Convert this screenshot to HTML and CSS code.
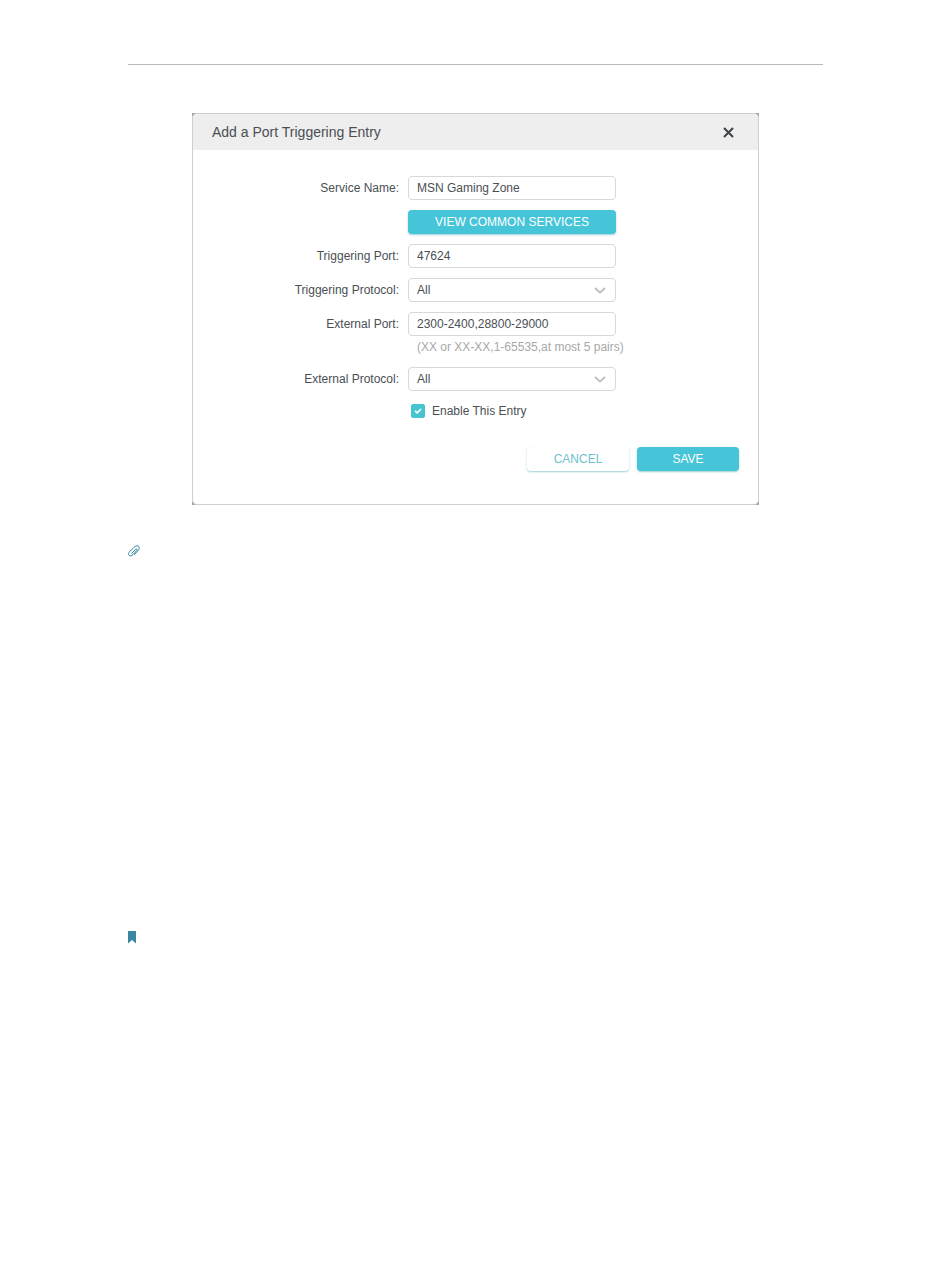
FILE: index.html
```html
<!DOCTYPE html>
<html lang="en">

<head>
    <meta charset="utf-8">
    <title>Add a Port Triggering Entry</title>
    <link rel="stylesheet" href="styles.css">
</head>

<body>
    <hr class="pageRule">

    <div class="backdrop">
    <form class="dialog">
        <div class="dialogHeader">
            <h1 class="dialogTitle">Add a Port Triggering Entry</h1>
            <button class="closeButton" type="button" aria-label="Close">
                <svg width="11" height="11" viewBox="0 0 11 11">
                    <path d="M1 1L10 10M10 1L1 10" fill="none" stroke="#3c4246" stroke-width="2" />
                </svg>
            </button>
        </div>

        <div class="fields">
            <label class="fieldLabel" for="serviceName">Service Name:</label>
            <input class="textField" type="text" id="serviceName" value="MSN Gaming Zone">

            <button class="button primaryButton servicesButton" type="button">VIEW COMMON SERVICES</button>

            <label class="fieldLabel" for="triggeringPort">Triggering Port:</label>
            <input class="textField" type="text" id="triggeringPort" value="47624">

            <label class="fieldLabel" for="triggeringProtocol">Triggering Protocol:</label>
            <div class="selectBox">
                <select class="textField" id="triggeringProtocol">
                    <option>All</option>
                    <option>TCP</option>
                    <option>UDP</option>
                </select>
                <svg class="arrow" width="12" height="7" viewBox="0 0 12 7">
                    <path d="M1 1L6 5.6L11 1" fill="none" stroke="#bcbcbc" stroke-width="1.8" />
                </svg>
            </div>

            <label class="fieldLabel" for="externalPort">External Port:</label>
            <input class="textField" type="text" id="externalPort" value="2300-2400,28800-29000">
            <p class="hint">(XX or XX-XX,1-65535,at most 5 pairs)</p>

            <label class="fieldLabel" for="externalProtocol">External Protocol:</label>
            <div class="selectBox">
                <select class="textField" id="externalProtocol">
                    <option>All</option>
                    <option>TCP</option>
                    <option>UDP</option>
                </select>
                <svg class="arrow" width="12" height="7" viewBox="0 0 12 7">
                    <path d="M1 1L6 5.6L11 1" fill="none" stroke="#bcbcbc" stroke-width="1.8" />
                </svg>
            </div>

            <div class="enableRow">
                <span class="checkWrap">
                    <input class="checkBox" type="checkbox" id="enableEntry" checked>
                    <svg class="checkMark" width="8" height="6" viewBox="0 0 8 6">
                        <path d="M1 2.8L3.2 4.8L7 1" fill="none" stroke="#fff" stroke-width="1.7" />
                    </svg>
                </span>
                <label for="enableEntry">Enable This Entry</label>
            </div>
        </div>

        <div class="actions">
            <button class="button cancelButton" type="button">CANCEL</button>
            <button class="button primaryButton" type="button">SAVE</button>
        </div>
    </form>
    </div>

    <!-- tips -->
    <section class="tips">
        <svg class="icon" width="12" height="12" viewBox="0 0 12 12">
            <path d="M3.8 8.3L7.6 4.4C8.8 3.3 9.8 4.3 8.8 5.5L5.1 9.5C3.6 11.1 1.9 11.2 1 10.3C0.1 9.3 0.5 7.8 1.8 6.5L6 2.3C7.8 0.5 9.8 0.5 10.8 1.5C11.8 2.6 11.3 4.3 10 5.7L6.3 9.6" fill="none" stroke="#2d86a0" stroke-width="1" stroke-linecap="round" />
        </svg>
    </section>

    <!-- note -->
    <section class="note">
        <svg class="icon" width="8" height="13" viewBox="0 0 8 13">
            <path d="M0 0H8V12.5L4 9L0 12.5Z" fill="#3b87a2" />
        </svg>
    </section>
</body>

</html>
```

FILE: styles.css
```css
body {
    margin: 0;
    padding: 64px 127px 64px 128px;
    background-color: white;
    color: #4a4f54;
    font-family: "Liberation Sans", Arial, sans-serif;
    font-size: 12px;
    line-height: 16px;
}

button,
input,
select {
    font: inherit;
    color: inherit;
}

.pageRule {
    margin: 0;
    border: none;
    border-top: 1px solid #b9b9b9;
}

/* the dark backdrop only shows at the dialog's round corners */
.backdrop {
    margin: 48px 64px 0;
    background-color: #a6a6a6;
}

.dialog {
    border: 1px solid #cfcfcf;
    border-radius: 5px;
    background-color: white;
    overflow: hidden;
}

.dialogHeader {
    display: flex;
    justify-content: space-between;
    align-items: center;
    height: 36px;
    padding: 0 24px 0 19px;
    background-color: #eeeeee;
}

.dialogTitle {
    margin: 0;
    font-size: 14px;
    font-weight: normal;
}

.closeButton {
    display: flex;
    padding: 0;
    border: none;
    background: none;
}

.fields {
    display: grid;
    grid-template-columns: 206px 208px;
    column-gap: 9px;
    row-gap: 10px;
    align-items: center;
    padding-top: 26px;
}

.fieldLabel {
    text-align: right;
}

.textField {
    box-sizing: border-box;
    width: 100%;
    height: 24px;
    padding: 0 8px;
    border: 1px solid #d8d8d8;
    border-radius: 4px;
    background-color: white;
}

.selectBox {
    display: grid;
    align-items: center;
}

.selectBox > * {
    grid-area: 1 / 1;
}

select.textField {
    appearance: none;
}

.arrow {
    justify-self: end;
    margin-right: 10px;
    pointer-events: none;
}

.button {
    height: 24px;
    padding: 0;
    border: none;
    border-radius: 4px;
    box-shadow: 0 1px 2px #9fcfd4;
}

.primaryButton {
    background-color: #46c5d8;
    color: white;
}

.cancelButton {
    background-color: white;
    color: #6fc1cc;
}

.servicesButton,
.hint,
.enableRow {
    grid-column: 2;
}

.hint {
    margin: -7px 0 2px;
    padding-left: 9px;
    color: #a8a8a8;
    white-space: nowrap;
}

.enableRow {
    display: flex;
    align-items: center;
    gap: 7px;
    padding: 2px 0 0 3px;
}

.checkWrap {
    display: grid;
    place-items: center;
}

.checkWrap > * {
    grid-area: 1 / 1;
}

.checkBox {
    appearance: none;
    width: 14px;
    height: 14px;
    margin: 0;
    border-radius: 2px;
    border: 1px solid #46c5d0;
}

.checkBox:checked {
    background-color: #46c5d0;
}

.checkMark {
    pointer-events: none;
}

.actions {
    display: flex;
    justify-content: flex-end;
    gap: 8px;
    padding: 28px 19px 33px;
}

.actions .button {
    width: 102px;
}

.icon {
    display: block;
}

.tips {
    margin-top: 40px;
    min-height: 346px;
}

.note {
    margin-top: 40px;
}
```
